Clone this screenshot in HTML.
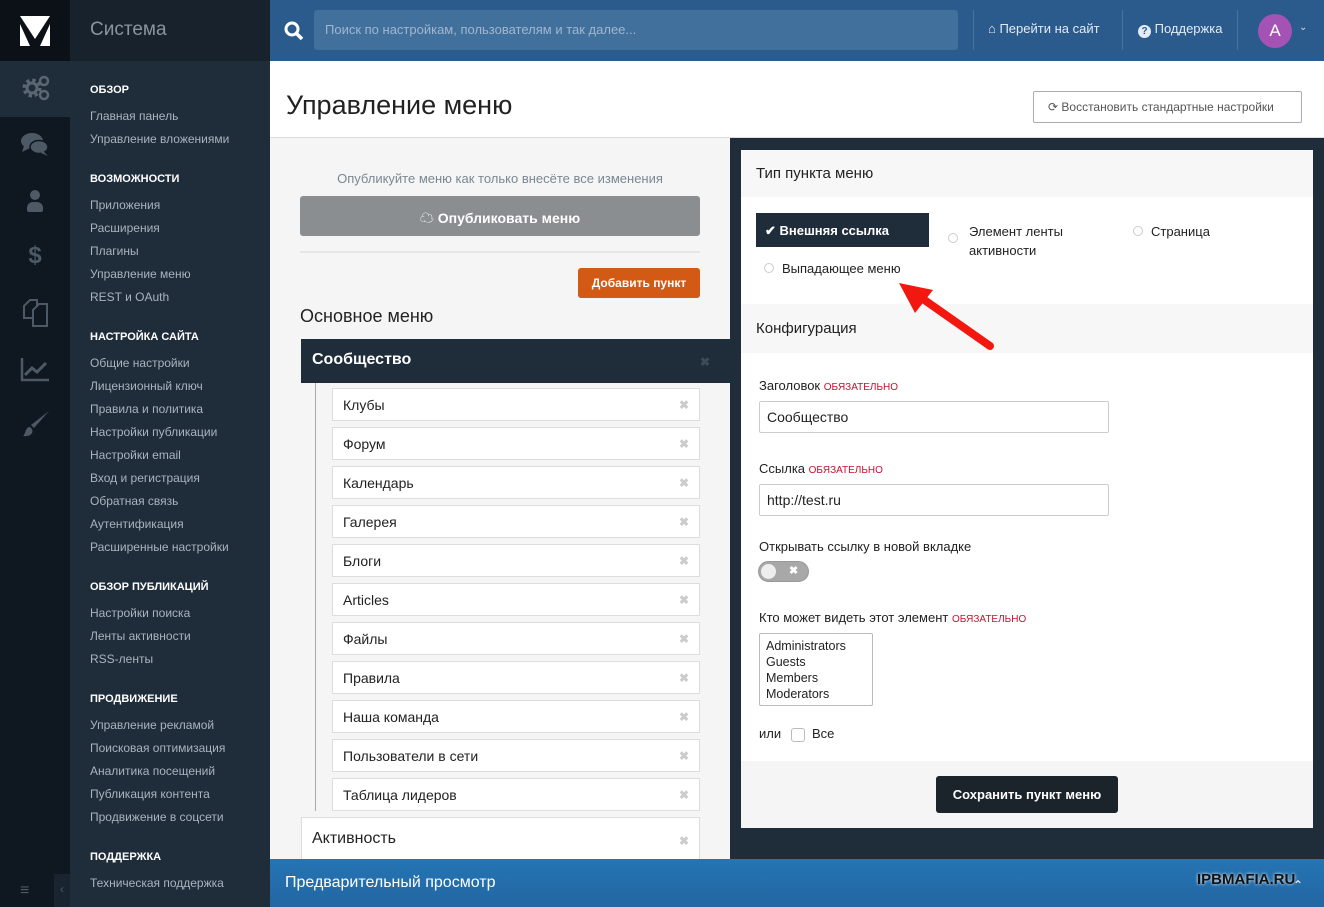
<!DOCTYPE html>
<html><head><meta charset="utf-8"><style>
*{box-sizing:border-box;margin:0;padding:0}
body{width:1324px;height:907px;overflow:hidden;font-family:"Liberation Sans","Noto Sans CJK SC",sans-serif;background:#f5f5f5;position:relative;color:#222}
.a{position:absolute}
.rail{left:0;top:0;width:70px;height:907px;background:#0f1720}
.side{left:70px;top:0;width:200px;height:907px;background:#1f2c3a}
.side .h{position:absolute;left:20px;color:#fff;font-size:11px;font-weight:bold}
.side .i{position:absolute;left:20px;color:#a9b4bf;font-size:12px}
.top{left:270px;top:0;width:1054px;height:61px;background:#2b5b8d}
.ic{position:absolute;left:0;width:70px;text-align:center;color:#4d5965;font-size:24px}
.li{position:absolute;left:332px;width:368px;height:33px;background:#fff;border:1px solid #ddd;font-size:14px;padding:8px 10px;color:#222}
.li .x,.x{position:absolute;right:10px;top:9px;color:#ccc;font-size:12px;font-weight:bold}
.radio{display:inline-block;width:10px;height:10px;border:1px solid #ccc;border-radius:50%}
.red{color:#c8102e;font-size:10px}
</style></head><body>
<div class="a rail"></div>
<div class="a" style="left:0;top:0;width:70px;height:61px;background:#0b1117"></div>
<svg class="a" style="left:20px;top:16px" width="30" height="30"><polygon points="0,0 30,0 15,23" fill="#fff"/><polygon points="0,8 0,30 10,30" fill="#fff"/><polygon points="30,8 30,30 20,30" fill="#fff"/></svg>
<div class="a" style="left:0;top:61px;width:70px;height:56px;background:#1f2c3a"></div>
<svg class="a" style="left:21px;top:73px" width="30" height="30"><circle cx="11" cy="15" r="7" fill="none" stroke="#5a6672" stroke-width="5" stroke-dasharray="3 2.5"/><circle cx="11" cy="15" r="5" fill="none" stroke="#5a6672" stroke-width="3"/><circle cx="23" cy="8" r="4" fill="none" stroke="#5a6672" stroke-width="2.5"/><circle cx="23" cy="22" r="4" fill="none" stroke="#5a6672" stroke-width="2.5"/></svg>
<svg class="a" style="left:21px;top:132px" width="28" height="26"><ellipse cx="11" cy="9" rx="11" ry="8" fill="#4d5965"/><path d="M3 14L1 20L9 16Z" fill="#4d5965"/><ellipse cx="18" cy="15" rx="9" ry="6.5" fill="#4d5965" stroke="#0f1720" stroke-width="1.5"/><path d="M22 19L27 24L20 21Z" fill="#4d5965"/></svg>
<div class="a" style="left:27px;top:190px;width:16px;height:22px"><div style="width:10px;height:10px;border-radius:50%;background:#4d5965;margin:0 auto"></div><div style="width:16px;height:10px;border-radius:6px 6px 2px 2px;background:#4d5965;margin-top:2px"></div></div>
<div class="ic" style="top:242px;font-weight:bold">$</div>
<svg class="a" style="left:22px;top:298px" width="28" height="30"><path d="M2 8L8 2H15V20H2Z" fill="none" stroke="#4d5965" stroke-width="2"/><path d="M11 12L17 6H25V28H11Z" fill="#0f1720" stroke="#4d5965" stroke-width="2"/></svg>
<svg class="a" style="left:20px;top:356px" width="30" height="26"><path d="M2 2V24H29" stroke="#4d5965" stroke-width="2.5" fill="none"/><path d="M5 19L12 12L17 16L26 7" stroke="#4d5965" stroke-width="3" fill="none"/></svg>
<svg class="a" style="left:22px;top:410px" width="28" height="28"><path d="M27 1L12 18L9 15Z" fill="#4d5965"/><path d="M8 17C3 17 4 24 1 26C7 27 12 24 10 19Z" fill="#4d5965"/></svg>
<div class="a" style="left:20px;top:882px;color:#4d5965;font-size:16px">≡</div>
<div class="a" style="left:54px;top:874px;width:16px;height:33px;background:#1a2430;color:#4d5965;font-size:12px;text-align:center;padding-top:8px">‹</div>
<div class="a side">
<div style="position:absolute;left:0;top:0;width:200px;height:61px;background:#18222d"></div>
<div style="position:absolute;left:20px;top:19px;color:#8a949e;font-size:19px">Система</div>
<div class="h" style="top:84px">ОБЗОР</div>
<div class="i" style="top:109px">Главная панель</div>
<div class="i" style="top:132px">Управление вложениями</div>
<div class="h" style="top:173px">ВОЗМОЖНОСТИ</div>
<div class="i" style="top:198px">Приложения</div>
<div class="i" style="top:221px">Расширения</div>
<div class="i" style="top:244px">Плагины</div>
<div class="i" style="top:267px">Управление меню</div>
<div class="i" style="top:290px">REST и OAuth</div>
<div class="h" style="top:331px">НАСТРОЙКА САЙТА</div>
<div class="i" style="top:356px">Общие настройки</div>
<div class="i" style="top:379px">Лицензионный ключ</div>
<div class="i" style="top:402px">Правила и политика</div>
<div class="i" style="top:425px">Настройки публикации</div>
<div class="i" style="top:448px">Настройки email</div>
<div class="i" style="top:471px">Вход и регистрация</div>
<div class="i" style="top:494px">Обратная связь</div>
<div class="i" style="top:517px">Аутентификация</div>
<div class="i" style="top:540px">Расширенные настройки</div>
<div class="h" style="top:581px">ОБЗОР ПУБЛИКАЦИЙ</div>
<div class="i" style="top:606px">Настройки поиска</div>
<div class="i" style="top:629px">Ленты активности</div>
<div class="i" style="top:652px">RSS-ленты</div>
<div class="h" style="top:693px">ПРОДВИЖЕНИЕ</div>
<div class="i" style="top:718px">Управление рекламой</div>
<div class="i" style="top:741px">Поисковая оптимизация</div>
<div class="i" style="top:764px">Аналитика посещений</div>
<div class="i" style="top:787px">Публикация контента</div>
<div class="i" style="top:810px">Продвижение в соцсети</div>
<div class="h" style="top:851px">ПОДДЕРЖКА</div>
<div class="i" style="top:876px">Техническая поддержка</div>
</div>
<div class="a top">
<svg style="position:absolute;left:14px;top:21px" width="20" height="20"><circle cx="8" cy="8" r="6" stroke="#fff" stroke-width="3" fill="none"/><path d="M12 12L18 18" stroke="#fff" stroke-width="3.5"/></svg>
<div style="position:absolute;left:44px;top:10px;width:644px;height:40px;background:#41709c;border-radius:3px;color:#9fb7cf;font-size:13px;padding:12px 11px">Поиск по настройкам, пользователям и так далее...</div>
<div style="position:absolute;left:703px;top:10px;width:1px;height:40px;background:#4a739c"></div>
<div style="position:absolute;left:718px;top:21px;color:#e3ebf3;font-size:13px">⌂ Перейти на сайт</div>
<div style="position:absolute;left:852px;top:10px;width:1px;height:40px;background:#4a739c"></div>
<div style="position:absolute;left:868px;top:21px;color:#e3ebf3;font-size:13px"><span style="display:inline-block;width:13px;height:13px;border-radius:50%;background:#e3ebf3;color:#2b5b8d;font-size:10px;font-weight:bold;text-align:center;line-height:13px;vertical-align:-1px">?</span> Поддержка</div>
<div style="position:absolute;left:967px;top:10px;width:1px;height:40px;background:#4a739c"></div>
<div style="position:absolute;left:988px;top:14px;width:34px;height:34px;border-radius:50%;background:#a453b5;color:#fff;font-size:17px;text-align:center;line-height:34px">A</div>
<div style="position:absolute;left:1029px;top:22px;color:#cfdce9;font-size:10px">⌄</div>
</div>
<div class="a" style="left:270px;top:61px;width:1054px;height:77px;background:#fff;border-bottom:1px solid #ddd"></div>
<div class="a" style="left:286px;top:90px;font-size:27px;color:#222">Управление меню</div>
<div class="a" style="left:1033px;top:91px;width:269px;height:32px;border:1px solid #aab;border-radius:2px;background:#fff;color:#555;font-size:12px;padding:8px 14px">⟳ Восстановить стандартные настройки</div>
<div class="a" style="left:730px;top:138px;width:594px;height:721px;background:#1f2c3a"></div>
<div class="a" style="left:300px;top:171px;width:400px;text-align:center;color:#7a8793;font-size:13px">Опубликуйте меню как только внесёте все изменения</div>
<div class="a" style="left:300px;top:196px;width:400px;height:40px;background:#8a8e91;border-radius:3px;color:#fff;font-size:14px;font-weight:bold;text-align:center;padding-top:12px">☁ Опубликовать меню</div>
<div class="a" style="left:300px;top:251px;width:400px;height:2px;background:#e6e6e6"></div>
<div class="a" style="left:578px;top:268px;width:122px;height:30px;background:#d35a14;border-radius:3px;color:#fff;font-size:12px;font-weight:bold;text-align:center;padding-top:8px">Добавить пункт</div>
<div class="a" style="left:300px;top:306px;font-size:18px;color:#222">Основное меню</div>
<div class="a" style="left:301px;top:339px;width:429px;height:44px;background:#1f2c3a;color:#fff;font-size:16px;font-weight:bold;padding:12px 11px">Сообщество<span class="x" style="right:20px;top:16px;color:#3d4b58">✖</span></div>
<div class="a" style="left:315px;top:383px;width:1px;height:428px;background:#aaa"></div>
<div class="li" style="top:388px">Клубы<span class="x">✖</span></div>
<div class="li" style="top:427px">Форум<span class="x">✖</span></div>
<div class="li" style="top:466px">Календарь<span class="x">✖</span></div>
<div class="li" style="top:505px">Галерея<span class="x">✖</span></div>
<div class="li" style="top:544px">Блоги<span class="x">✖</span></div>
<div class="li" style="top:583px">Articles<span class="x">✖</span></div>
<div class="li" style="top:622px">Файлы<span class="x">✖</span></div>
<div class="li" style="top:661px">Правила<span class="x">✖</span></div>
<div class="li" style="top:700px">Наша команда<span class="x">✖</span></div>
<div class="li" style="top:739px">Пользователи в сети<span class="x">✖</span></div>
<div class="li" style="top:778px">Таблица лидеров<span class="x">✖</span></div>
<div class="a" style="left:301px;top:817px;width:399px;height:50px;background:#fff;border:1px solid #ddd;font-size:16px;padding:12px 10px">Активность<span class="x" style="top:16px">✖</span></div>
<div class="a" style="left:741px;top:150px;width:572px;height:678px;background:#fff"></div>
<div class="a" style="left:741px;top:150px;width:572px;height:47px;background:#f7f7f7;font-size:15px;padding:15px 15px">Тип пункта меню</div>
<div class="a" style="left:756px;top:213px;width:173px;height:34px;background:#1f2c3a;color:#fff;font-size:13px;font-weight:bold;padding:10px 9px">✔ Внешняя ссылка</div>
<div class="a" style="left:948px;top:222px;font-size:13px;line-height:19px"><span class="radio" style="position:absolute;left:0;top:11px"></span><div style="margin-left:21px">Элемент ленты<br>активности</div></div>
<div class="a" style="left:1133px;top:224px;font-size:13px"><span class="radio" style="margin-right:8px"></span>Страница</div>
<div class="a" style="left:764px;top:261px;font-size:13px"><span class="radio" style="margin-right:8px"></span>Выпадающее меню</div>
<div class="a" style="left:741px;top:304px;width:572px;height:49px;background:#f7f7f7;font-size:15px;padding:16px 15px">Конфигурация</div>
<svg class="a" style="left:895px;top:280px" width="105" height="75"><path d="M95 66L18 12" stroke="#f2180f" stroke-width="8" stroke-linecap="round"/><polygon points="4,3 38,10 20,33" fill="#f2180f"/></svg>
<div class="a" style="left:759px;top:378px;font-size:13px">Заголовок <span class="red">ОБЯЗАТЕЛЬНО</span></div>
<div class="a" style="left:759px;top:401px;width:350px;height:32px;border:1px solid #ccc;border-radius:2px;font-size:14px;padding:7px 7px">Сообщество</div>
<div class="a" style="left:759px;top:461px;font-size:13px">Ссылка <span class="red">ОБЯЗАТЕЛЬНО</span></div>
<div class="a" style="left:759px;top:484px;width:350px;height:32px;border:1px solid #ccc;border-radius:2px;font-size:14px;padding:7px 7px">http://test.ru</div>
<div class="a" style="left:759px;top:539px;font-size:13px">Открывать ссылку в новой вкладке</div>
<div class="a" style="left:758px;top:561px;width:51px;height:21px;border-radius:11px;background:#a8a8a8;border:1px solid #999"><div style="position:absolute;left:2px;top:2px;width:15px;height:15px;border-radius:50%;background:#eee"></div><span style="position:absolute;left:30px;top:2px;color:#fff;font-size:11px;font-weight:bold">✖</span></div>
<div class="a" style="left:759px;top:610px;font-size:13px">Кто может видеть этот элемент <span class="red">ОБЯЗАТЕЛЬНО</span></div>
<div class="a" style="left:759px;top:633px;width:114px;height:73px;border:1px solid #bbb;border-radius:2px;font-size:12.5px;line-height:16px;padding:4px 6px">Administrators<br>Guests<br>Members<br>Moderators</div>
<div class="a" style="left:759px;top:726px;font-size:13px">или</div>
<div class="a" style="left:791px;top:728px;width:14px;height:14px;border:1px solid #bbb;border-radius:3px"></div>
<div class="a" style="left:812px;top:726px;font-size:13px">Все</div>
<div class="a" style="left:741px;top:761px;width:572px;height:67px;background:#f5f5f5"></div>
<div class="a" style="left:936px;top:776px;width:182px;height:37px;background:#1b232b;border-radius:3px;color:#fff;font-size:13px;font-weight:bold;text-align:center;padding-top:11px">Сохранить пункт меню</div>
<div class="a" style="left:270px;top:859px;width:1054px;height:48px;background:linear-gradient(#2574b4,#2267a2);color:#fff;font-size:16px;padding:15px 15px">Предварительный просмотр</div>
<div class="a" style="left:1197px;top:871px;color:#111;font-size:15px;font-weight:bold;text-shadow:0 0 3px #fff">IPBMAFIA.RU</div>
<div class="a" style="left:1293px;top:878px;color:#fff;font-size:12px">⌃</div>
</body></html>
